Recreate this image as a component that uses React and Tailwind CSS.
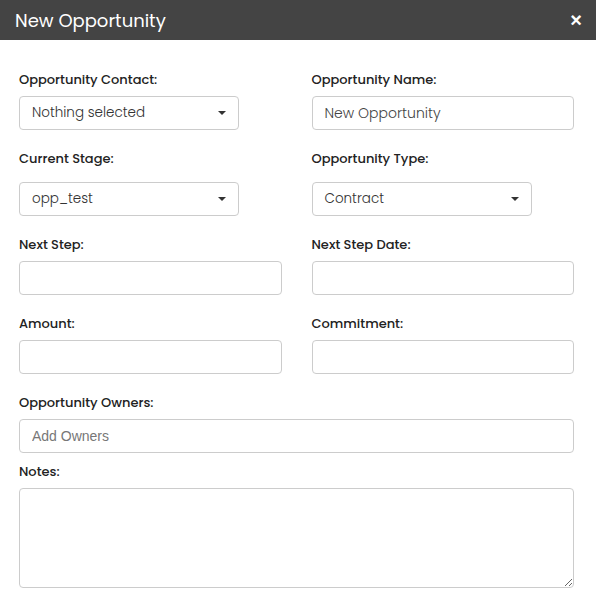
import React from 'react';

const font = { fontFamily: 'Poppins, Lato, "Open Sans", sans-serif' };

const Label = ({ children, className = '' }) => (
  <label className={`block h-4 text-[13px] leading-4 font-medium text-[#222] ${className}`}>{children}</label>
);

const Select = ({ value }) => (
  <div className="w-[220px] h-[34px] border border-[#ccc] rounded flex items-center justify-between pl-3 pr-3 text-[13.5px] font-light text-[#333]">
    <span>{value}</span>
    <span className="w-0 h-0 border-l-[4px] border-r-[4px] border-t-[4px] border-l-transparent border-r-transparent border-t-[#333]" />
  </div>
);

const Input = ({ value = '', placeholder }) => (
  <input
    defaultValue={value}
    placeholder={placeholder}
    className="w-full h-[34px] border border-[#ccc] rounded px-3 text-[14px] font-light text-[#444] placeholder-[#777] outline-none"
    style={placeholder ? { fontFamily: '"Liberation Sans", Arial, sans-serif' } : undefined}
  />
);

export default function App() {
  return (
    <div className="w-[596px] h-[593px] bg-white overflow-hidden" style={font}>
      <div className="h-10 bg-[#444] flex items-center justify-between pl-[15px] pr-[14px]">
        <h1 className="text-[18px] text-white">New Opportunity</h1>
        <span className="text-white text-[20px] font-bold leading-none" style={{ fontFamily: '"Liberation Sans", Arial, sans-serif' }}>×</span>
      </div>
      <div className="pl-[19px] pr-[22px] pt-8">
        <div className="grid grid-cols-2 gap-x-[30px]">
          <div>
            <Label className="mb-2">Opportunity Contact:</Label>
            <Select value="Nothing selected" />
          </div>
          <div>
            <Label className="mb-2">Opportunity Name:</Label>
            <Input value="New Opportunity" />
          </div>
          <div className="mt-[21px]">
            <Label className="mb-[15px]">Current Stage:</Label>
            <Select value="opp_test" />
          </div>
          <div className="mt-[21px]">
            <Label className="mb-[15px]">Opportunity Type:</Label>
            <Select value="Contract" />
          </div>
          <div className="mt-[21px]">
            <Label className="mb-2">Next Step:</Label>
            <Input />
          </div>
          <div className="mt-[21px]">
            <Label className="mb-2">Next Step Date:</Label>
            <Input />
          </div>
          <div className="mt-[21px]">
            <Label className="mb-2">Amount:</Label>
            <Input />
          </div>
          <div className="mt-[21px]">
            <Label className="mb-2">Commitment:</Label>
            <Input />
          </div>
        </div>
        <div className="mt-[21px]">
          <Label className="mb-2">Opportunity Owners:</Label>
          <Input placeholder="Add Owners" />
        </div>
        <div className="mt-[11px]">
          <Label className="mb-2">Notes:</Label>
          <textarea className="block w-full h-[100px] border border-[#ccc] rounded outline-none" />
        </div>
      </div>
    </div>
  );
}
